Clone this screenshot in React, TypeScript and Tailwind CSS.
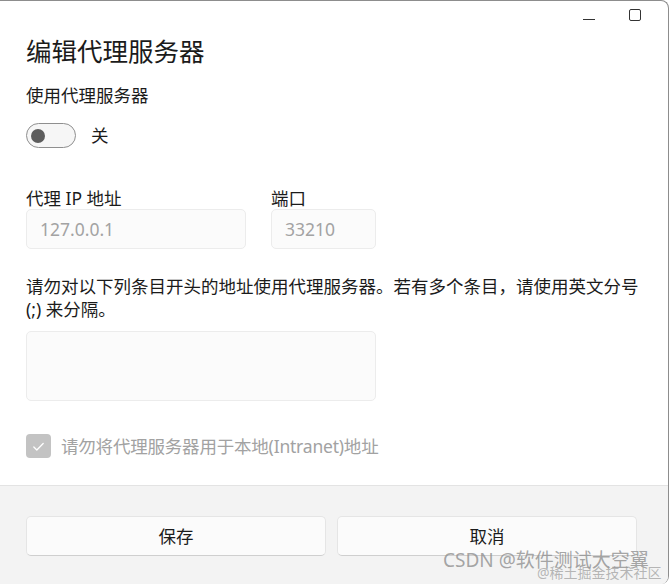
import React, { useState } from 'react';

const font = "font-['Noto_Sans','Noto_Sans_CJK_SC',sans-serif]";

// Caption buttons in the top-right corner of the dialog window
const CaptionButtons: React.FC = () => (
    <div className="flex h-[33px] items-center justify-end">
        <button className="flex h-[33px] w-[46px] items-center justify-center">
            <span className="mt-[4px] block h-px w-[12px] bg-[#333]" />
        </button>
        <button className="mr-[10px] flex h-[33px] w-[46px] items-center justify-center">
            <span className="mb-[5px] block h-[12px] w-[12px] rounded-[2px] border border-[#333]" />
        </button>
    </div>
);

const Toggle: React.FC<{ on: boolean; onChange: (v: boolean) => void }> = ({ on, onChange }) => (
    <button
        onClick={() => onChange(!on)}
        className="flex h-[25px] w-[50px] items-center rounded-full border border-[#8f8f8f] bg-[#f6f6f6] px-[4px]"
    >
        <span className="block h-[14px] w-[14px] rounded-full bg-[#5d5d5d]" />
    </button>
);

const TextBox: React.FC<{ placeholder?: string; className?: string }> = ({ placeholder, className }) => (
    <div
        className={`flex h-[40px] items-center rounded-[5px] border border-[#ececec] bg-[#fbfbfb] px-[13px] text-[17.5px] text-[#a3a3a3] ${className ?? ''}`}
    >
        {placeholder}
    </div>
);

const App: React.FC = () => {
    const [enabled, setEnabled] = useState(false);

    return (
        <div className={`relative h-[584px] w-[670px] overflow-hidden bg-white ${font} text-[#1b1b1b]`}>
            <div className="flex h-full w-[669px] flex-col overflow-hidden rounded-r-[8px] border-r border-t border-[#8d8d8d] bg-white">
                <CaptionButtons />

                <div className="h-[428px] overflow-hidden pl-[26px]">
                    <h1 className="-mt-[1px] text-[25.5px] leading-[36px] font-normal">编辑代理服务器</h1>

                    <div className="mt-[14px] text-[17.5px] leading-[24px]">使用代理服务器</div>
                    <div className="mt-[16px] flex items-center gap-[15px]">
                        <Toggle on={enabled} onChange={setEnabled} />
                        <span className="text-[17.5px] leading-[25px]">关</span>
                    </div>

                    <div className="mt-[39px] flex gap-[25px]">
                        <div className="flex flex-col">
                            <span className="text-[17.5px] leading-[22px]">代理 IP 地址</span>
                            <TextBox placeholder="127.0.0.1" className="w-[220px]" />
                        </div>
                        <div className="flex flex-col">
                            <span className="text-[17.5px] leading-[22px]">端口</span>
                            <TextBox placeholder="33210" className="w-[105px]" />
                        </div>
                    </div>

                    <p className="mt-[26px] w-[614px] text-[17.5px] leading-[23px]">
                        请勿对以下列条目开头的地址使用代理服务器。若有多个条目，请使用英文分号 (;) 来分隔。
                    </p>
                    <div className="mt-[10px] h-[70px] w-[350px] rounded-[5px] border border-[#ececec] bg-[#fbfbfb]" />

                    <div className="mt-[33px] flex items-start gap-[10px]">
                        <span className="flex h-[24px] w-[25px] items-center justify-center rounded-[4px] bg-[#c3c3c3]">
                            <svg width="15" height="15" viewBox="0 0 16 16" fill="none">
                                <path d="M3 8.5l3.2 3.2L13 4.8" stroke="white" strokeWidth="1.4" strokeLinecap="round" strokeLinejoin="round" />
                            </svg>
                        </span>
                        <span className="text-[17.5px] leading-[24px] tracking-[-0.2px] text-[#a2a2a2]">请勿将代理服务器用于本地(Intranet)地址</span>
                    </div>
                </div>

                <div className="flex-1" />

                {/* Footer */}
                <div className="grid h-[99px] grid-cols-2 gap-[11px] border-t border-[#e3e3e3] bg-[#f3f3f3] pl-[26px] pr-[31px] pt-[30px]">
                    <button className="h-[40px] rounded-[5px] border border-[#e5e5e5] border-b-[#cfcfcf] bg-[#fbfbfb] text-[17.5px]">保存</button>
                    <button className="h-[40px] rounded-[5px] border border-[#e5e5e5] border-b-[#cfcfcf] bg-[#fbfbfb] text-[17.5px]">取消</button>
                </div>
            </div>

            {/* watermark */}
            <div className="pointer-events-none absolute left-[443px] top-[548px] text-[19px] leading-[24px] text-[#8f8f8f]/80">
                CSDN @软件测试大空翼
            </div>
            <div className="pointer-events-none absolute left-[537px] top-[565px] text-[14px] leading-[16px] text-[#9a9a9a]/70">
                @稀土掘金技术社区
            </div>
        </div>
    );
};

export default App;
